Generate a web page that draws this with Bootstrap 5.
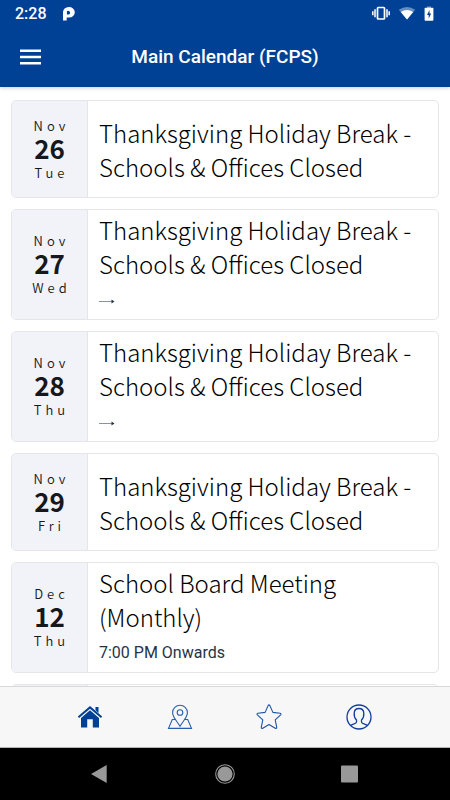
<!DOCTYPE html>
<html lang="en">
<head>
<meta charset="utf-8">
<meta name="viewport" content="width=device-width, initial-scale=1">
<title>Main Calendar (FCPS)</title>
<link href="https://cdn.jsdelivr.net/npm/bootstrap@5.3.0/dist/css/bootstrap.min.css" rel="stylesheet">
<style>
  body { font-family: Roboto, sans-serif; background: #fff; color: #000; }
  .app-head { background: #004195; color: #fff; box-shadow: 0 1px 4px rgba(0,0,0,.2); z-index: 1; }
  .status-row { height: 28px; padding: 0 16px 0 15px; font-size: 16px; line-height: 28px; font-weight: 500; }
  .title-row { height: 59px; padding-bottom: 2px; display: grid; grid-template-columns: 62px 1fr 62px; align-items: center; }
  .title-row h1 { font-size: 19px; line-height: 24px; font-weight: 500; }
  .menu-btn { height: 44px; }
  .events { padding: 13px 11px 0; gap: 11px; }
  .event { border: 1px solid #e6e6e8; border-radius: 5px; min-height: 98px; flex: none; overflow: hidden; font-family: "Noto Sans CJK JP", sans-serif; }
  .date-box { width: 76px; background: #f2f3f8; border-right: 1px solid #e6e6e8; color: #16181b; }
  .date-small { font-size: 13px; line-height: 20px; font-weight: 350; letter-spacing: 4px; padding-left: 4px; }
  .date-day { font-size: 26px; line-height: 24px; padding-bottom: 3px; font-weight: 700; }
  .event-text { padding: 3px 11px 1px; }
  .event-text h2 { font-size: 24px; line-height: 34px; font-weight: 300; }
  .event-note { font-family: Roboto, sans-serif; font-size: 16px; line-height: 24px; color: #243447; margin-top: 7px; padding-bottom: 6px; }
  .tabs { height: 62px; background: #f7f7f7; border-top: 1px solid #d8d8d8; border-bottom: 1px solid #b4b4b4; padding: 0 46px 0 45px; z-index: 1; }
  .sys-nav { height: 52px; background: #000; padding: 0 38px; }
  .tabs svg, .sys-nav svg, .app-head svg { display: block; }
</style>
<script src="https://cdn.jsdelivr.net/npm/bootstrap@5.3.0/dist/js/bootstrap.bundle.min.js"></script>
</head>
<body>
<div class="d-flex flex-column vh-100 overflow-hidden">
  <header class="app-head flex-shrink-0">
    <div class="status-row d-flex align-items-center">
      <span>2:28</span>
      <svg class="ms-3" width="12" height="16" viewBox="0 0 12 16" aria-hidden="true"><path d="M0 14.500V6.300A5.900 5.300 0 1 1 6 11.500H3.700V14.500zM3.900 5.200V8.400H6A1.900 1.700 0 1 0 3.900 5.200" fill="#fff" fill-rule="evenodd"/></svg>
      <svg class="ms-auto" width="18" height="16" viewBox="0 0 18 16" fill="none" stroke="#fff" aria-hidden="true"><rect x="5.500" y="1.500" width="7" height="11.500" rx=".8" stroke-width="1.700"/><path d="M3 3.300v8M.8 5.300v4M15 3.300v8M17.200 5.300v4" stroke-width="1.500"/></svg>
      <svg class="ms-2" width="18" height="16" viewBox="0 0 18 16" aria-hidden="true"><path d="M.8 3.800Q9-2 17.200 3.800L9 13.500Z" fill="#fff" opacity=".4"/><path d="M2.800 6Q9 1.800 15.200 6L9 13.500Z" fill="#fff"/></svg>
      <svg class="ms-2" width="10" height="16" viewBox="0 0 10 16" aria-hidden="true"><path d="M3 .5h4v2H3z" fill="#fff" opacity=".5"/><rect x=".6" y="1.800" width="8.800" height="13" rx=".8" fill="#fff"/><path d="M5.500 4 3 9h1.700v3.500L7.200 7.500H5.500z" fill="#004195"/></svg>
    </div>
    <div class="title-row">
      <button type="button" class="menu-btn btn border-0 p-0 d-flex justify-content-center align-items-center" aria-label="Menu">
        <svg width="22" height="16" viewBox="0 0 22 16" fill="#fff"><path d="M0 .5h21V3H0zM0 6.700h21v2.500H0zM0 13h21v2.500H0z"/></svg>
      </button>
      <h1 class="m-0 text-center">Main Calendar (FCPS)</h1>
    </div>
  </header>

  <main class="events d-flex flex-column flex-grow-1 overflow-hidden">
    <article class="event d-flex">
      <div class="date-box flex-shrink-0 d-flex flex-column justify-content-center text-center">
        <span class="date-small">Nov</span><span class="date-day">26</span><span class="date-small">Tue</span>
      </div>
      <div class="event-text d-flex flex-column justify-content-center"><h2 class="m-0">Thanksgiving Holiday Break - Schools &amp; Offices Closed</h2></div>
    </article>
    <article class="event d-flex">
      <div class="date-box flex-shrink-0 d-flex flex-column justify-content-center text-center">
        <span class="date-small">Nov</span><span class="date-day">27</span><span class="date-small">Wed</span>
      </div>
      <div class="event-text"><h2 class="m-0">Thanksgiving Holiday Break - Schools &amp; Offices Closed</h2>
        <div class="event-note"><svg width="16" height="6" viewBox="0 0 16 6" aria-label="Continues"><path d="M0 3.500h14" stroke="#8b949e"/><path d="M12.500 1.500 15.500 3.500l-3 2z" fill="#243447"/></svg></div></div>
    </article>
    <article class="event d-flex">
      <div class="date-box flex-shrink-0 d-flex flex-column justify-content-center text-center">
        <span class="date-small">Nov</span><span class="date-day">28</span><span class="date-small">Thu</span>
      </div>
      <div class="event-text"><h2 class="m-0">Thanksgiving Holiday Break - Schools &amp; Offices Closed</h2>
        <div class="event-note"><svg width="16" height="6" viewBox="0 0 16 6" aria-label="Continues"><path d="M0 3.500h14" stroke="#8b949e"/><path d="M12.500 1.500 15.500 3.500l-3 2z" fill="#243447"/></svg></div></div>
    </article>
    <article class="event d-flex">
      <div class="date-box flex-shrink-0 d-flex flex-column justify-content-center text-center">
        <span class="date-small">Nov</span><span class="date-day">29</span><span class="date-small">Fri</span>
      </div>
      <div class="event-text d-flex flex-column justify-content-center"><h2 class="m-0">Thanksgiving Holiday Break - Schools &amp; Offices Closed</h2></div>
    </article>
    <article class="event d-flex">
      <div class="date-box flex-shrink-0 d-flex flex-column justify-content-center text-center">
        <span class="date-small">Dec</span><span class="date-day">12</span><span class="date-small">Thu</span>
      </div>
      <div class="event-text"><h2 class="m-0">School Board Meeting (Monthly)</h2><div class="event-note">7:00 PM Onwards</div></div>
    </article>
    <article class="event d-flex"><div class="date-box flex-shrink-0"></div></article>
  </main>

  <nav class="tabs d-flex flex-shrink-0" aria-label="Sections">
    <a href="#home" class="flex-fill d-flex justify-content-center align-items-center" aria-label="Home">
      <svg width="26" height="26" viewBox="0 0 26 26" fill="#004195"><path d="M18.500 3h3v6l-3-2.800z"/><path d="M13 2 .8 12.600l1.300 1.500L13 4.800l10.900 9.300 1.300-1.500z"/><path d="M13 6.300 4 14v9.500h6.200v-8.300h5.600v8.300H22V14z"/></svg></a>
    <a href="#places" class="flex-fill d-flex justify-content-center align-items-center" aria-label="Places">
      <svg width="26" height="26" viewBox="0 0 26 26" fill="none" stroke="#2a5dab" stroke-width="1.100"><path d="M13 22.300C10 17 5.600 13.600 5.600 8.600a7.400 7.400 0 0 1 14.800 0c0 5-4.400 8.400-7.400 13.700z"/><circle cx="13" cy="8.500" r="2.800"/><path d="M8 15.500H5.300L1.500 24.400h23L20.700 15.500H18"/></svg></a>
    <a href="#favorites" class="flex-fill d-flex justify-content-center align-items-center" aria-label="Favorites">
      <svg width="26" height="26" viewBox="0 0 26 26" fill="none" stroke="#1c53a5" stroke-width="1.100" stroke-linejoin="round"><path d="M12.100 1.600q.9-1.500 1.800 0l3 6.800 7.200.8q1.500.4.500 1.600l-5.400 5 1.500 7.400q0 1.600-1.500 1L13 20.500l-6.200 3.700q-1.500.6-1.500-1l1.500-7.400-5.400-5q-1-1.200.5-1.600l7.200-.8z"/></svg></a>
    <a href="#profile" class="flex-fill d-flex justify-content-center align-items-center" aria-label="Profile">
      <svg width="26" height="26" viewBox="0 0 26 26" fill="none" stroke="#103f9c" stroke-width="1.300"><circle cx="13" cy="13" r="12"/><path d="M4.500 21.500c2-1.500 6-1.700 6-3.500v-2c-2-2-2.600-4-2.300-7 .2-3 2-4.500 4.800-4.500s4.600 1.500 4.800 4.500c.3 3-.3 5-2.300 7v2c0 1.800 4 2 6 3.500"/></svg></a>
  </nav>
  <nav class="sys-nav d-flex flex-shrink-0" aria-label="System">
    <button type="button" class="btn border-0 p-0 flex-fill d-flex justify-content-center align-items-center" aria-label="Back"><svg width="20" height="20" viewBox="0 0 20 20"><path d="M1 10 16.700 1v18z" fill="#999"/></svg></button>
    <button type="button" class="btn border-0 p-0 flex-fill d-flex justify-content-center align-items-center" aria-label="Home screen"><svg width="20" height="20" viewBox="0 0 20 20"><circle cx="10" cy="10" r="9.300" fill="none" stroke="#999" stroke-width="1.100"/><circle cx="10" cy="10" r="7.600" fill="#999"/></svg></button>
    <button type="button" class="btn border-0 p-0 flex-fill d-flex justify-content-center align-items-center" aria-label="Recent apps"><svg width="20" height="18" viewBox="0 0 20 18"><rect x="1" y=".5" width="17" height="17" rx="1" fill="#999"/></svg></button>
  </nav>
</div>
</body>
</html>
